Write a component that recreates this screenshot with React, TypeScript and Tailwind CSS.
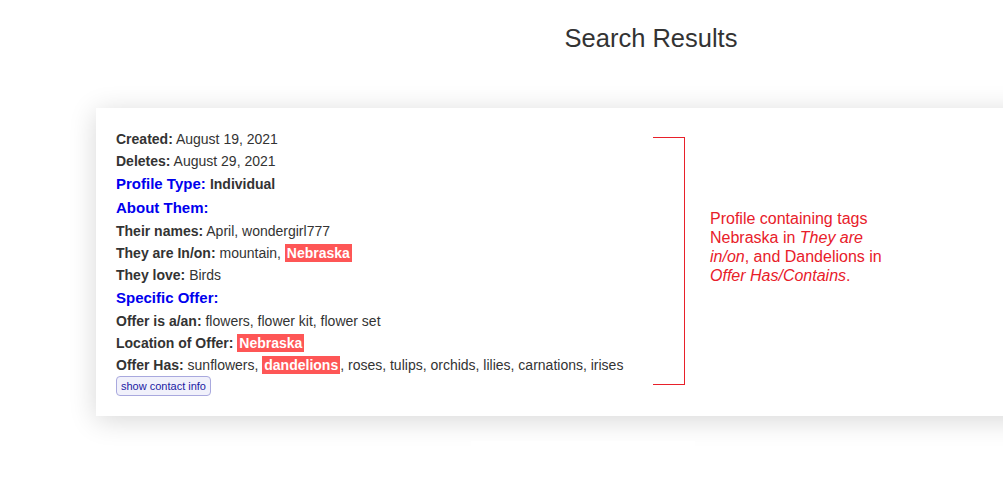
const hl = 'bg-[#fe5656] text-white font-bold px-[2px] py-px';

function Row({ label, children }: { label: string; children?: React.ReactNode }) {
  return (
    <div className="text-[14px] leading-[22px]">
      <span className="font-bold">{label}</span> {children}
    </div>
  );
}

function Heading({ children }: { children: React.ReactNode }) {
  return <div className="text-[15px] leading-[24px] font-bold text-[#0000ee]">{children}</div>;
}

export default function App() {
  return (
    <div className="h-[491px] overflow-hidden bg-white font-['Liberation_Sans',Arial,sans-serif] text-[#333]">
      <div className="w-[1206px] pl-[96px]">
        <h1 className="pt-[21px] text-center text-[25.5px] leading-[34px]">Search Results</h1>

        <div className="mt-[53px] flex items-start bg-white p-5 shadow-[0_4px_26px_rgba(0,0,0,0.16)]">
          <div className="w-[537px] shrink-0">
            <Row label="Created:">August 19, 2021</Row>
            <Row label="Deletes:">August 29, 2021</Row>
            <div className="text-[15px] leading-[24px]">
              <span className="font-bold text-[#0000ee]">Profile Type:</span>{' '}
              <span className="text-[14px] font-bold">Individual</span>
            </div>
            <Heading>About Them:</Heading>
            <Row label="Their names:">April, wondergirl777</Row>
            <Row label="They are In/on:">
              mountain, <span className={hl}>Nebraska</span>
            </Row>
            <Row label="They love:">Birds</Row>
            <Heading>Specific Offer:</Heading>
            <Row label="Offer is a/an:">flowers, flower kit, flower set</Row>
            <Row label="Location of Offer:">
              <span className={hl}>Nebraska</span>
            </Row>
            <Row label="Offer Has:">
              sunflowers, <span className={hl}>dandelions</span>, roses, tulips, orchids, lilies, carnations, irises
            </Row>
            <button className="flex h-5 items-center rounded-[4px] border border-[#a9a9de] bg-[#f1f1fb] px-[4px] text-[11px] leading-none text-[#1a1aa3]">
              show contact info
            </button>
          </div>

          <div className="mt-[9px] h-[248px] w-[32px] shrink-0 border-y border-r border-[#e8202a]" />

          <p className="ml-[25px] mt-[81px] w-[180px] text-[16px] leading-[19px] text-[#e8202a]">
            Profile containing tags Nebraska in <i>They are in/on</i>, and Dandelions in <i>Offer Has/Contains</i>.
          </p>
        </div>

        <div className="ml-[375px] mt-[25px] h-[11px] w-[224px] bg-white" />
      </div>
    </div>
  );
}
